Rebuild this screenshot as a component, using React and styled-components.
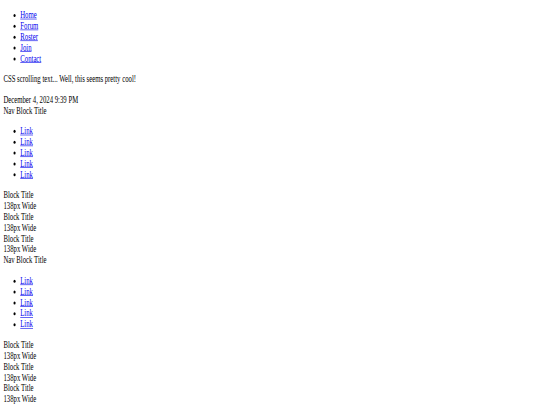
import styled, { createGlobalStyle } from 'styled-components';

const GlobalStyle = createGlobalStyle`
  html, body {
    margin: 0;
    padding: 0;
    background: #ffffff;
    overflow: hidden;
  }
`;

// The reference is an unstyled 1280px-wide page shrunk into the window,
// so lay it out at full size and scale the whole sheet down.
const Sheet = styled.div`
  display: flow-root;
  width: 1280px;
  height: 680px;
  padding: 0 8px;
  box-sizing: border-box;
  transform: scale(0.421875, 0.604);
  transform-origin: 0 0;
  font-family: "Liberation Serif", "Times New Roman", serif;
  font-size: 16px;
  color: #000000;
`;

const MenuList = styled.ul`
  margin: 16px 0;
  padding-left: 40px;
  list-style: disc;
`;

const MenuLink = styled.a`
  color: #0000ee;
  text-decoration: underline;
`;

const Ticker = styled.p`
  margin: 16px 0;
`;

const Line = styled.div``;

const BlockGroup = styled.div``;

const FooterLine = styled.div`
  white-space: pre;
`;

const menu = ['Home', 'Forum', 'Roster', 'Join', 'Contact'];

function NavBlock() {
  return (
    <BlockGroup>
      <Line>Nav Block Title</Line>
      <MenuList>
        {[0, 1, 2, 3, 4].map((i) => (
          <li key={i}>
            <MenuLink href="#">Link</MenuLink>
          </li>
        ))}
      </MenuList>
      {[0, 1, 2].map((i) => (
        <BlockGroup key={i}>
          <Line>Block Title</Line>
          <Line>138px Wide</Line>
        </BlockGroup>
      ))}
    </BlockGroup>
  );
}

export default function App() {
  return (
    <>
      <GlobalStyle />
      <Sheet>
        <MenuList>
          {menu.map((m) => (
            <li key={m}>
              <MenuLink href="#">{m}</MenuLink>
            </li>
          ))}
        </MenuList>
        <Ticker>CSS scrolling text... Well, this seems pretty cool!</Ticker>
        <Line>December 4, 2024 9:39 PM</Line>
        <NavBlock />
        <NavBlock />
        <FooterLine>Page content goes here, this is the main column text.</FooterLine>
      </Sheet>
    </>
  );
}
